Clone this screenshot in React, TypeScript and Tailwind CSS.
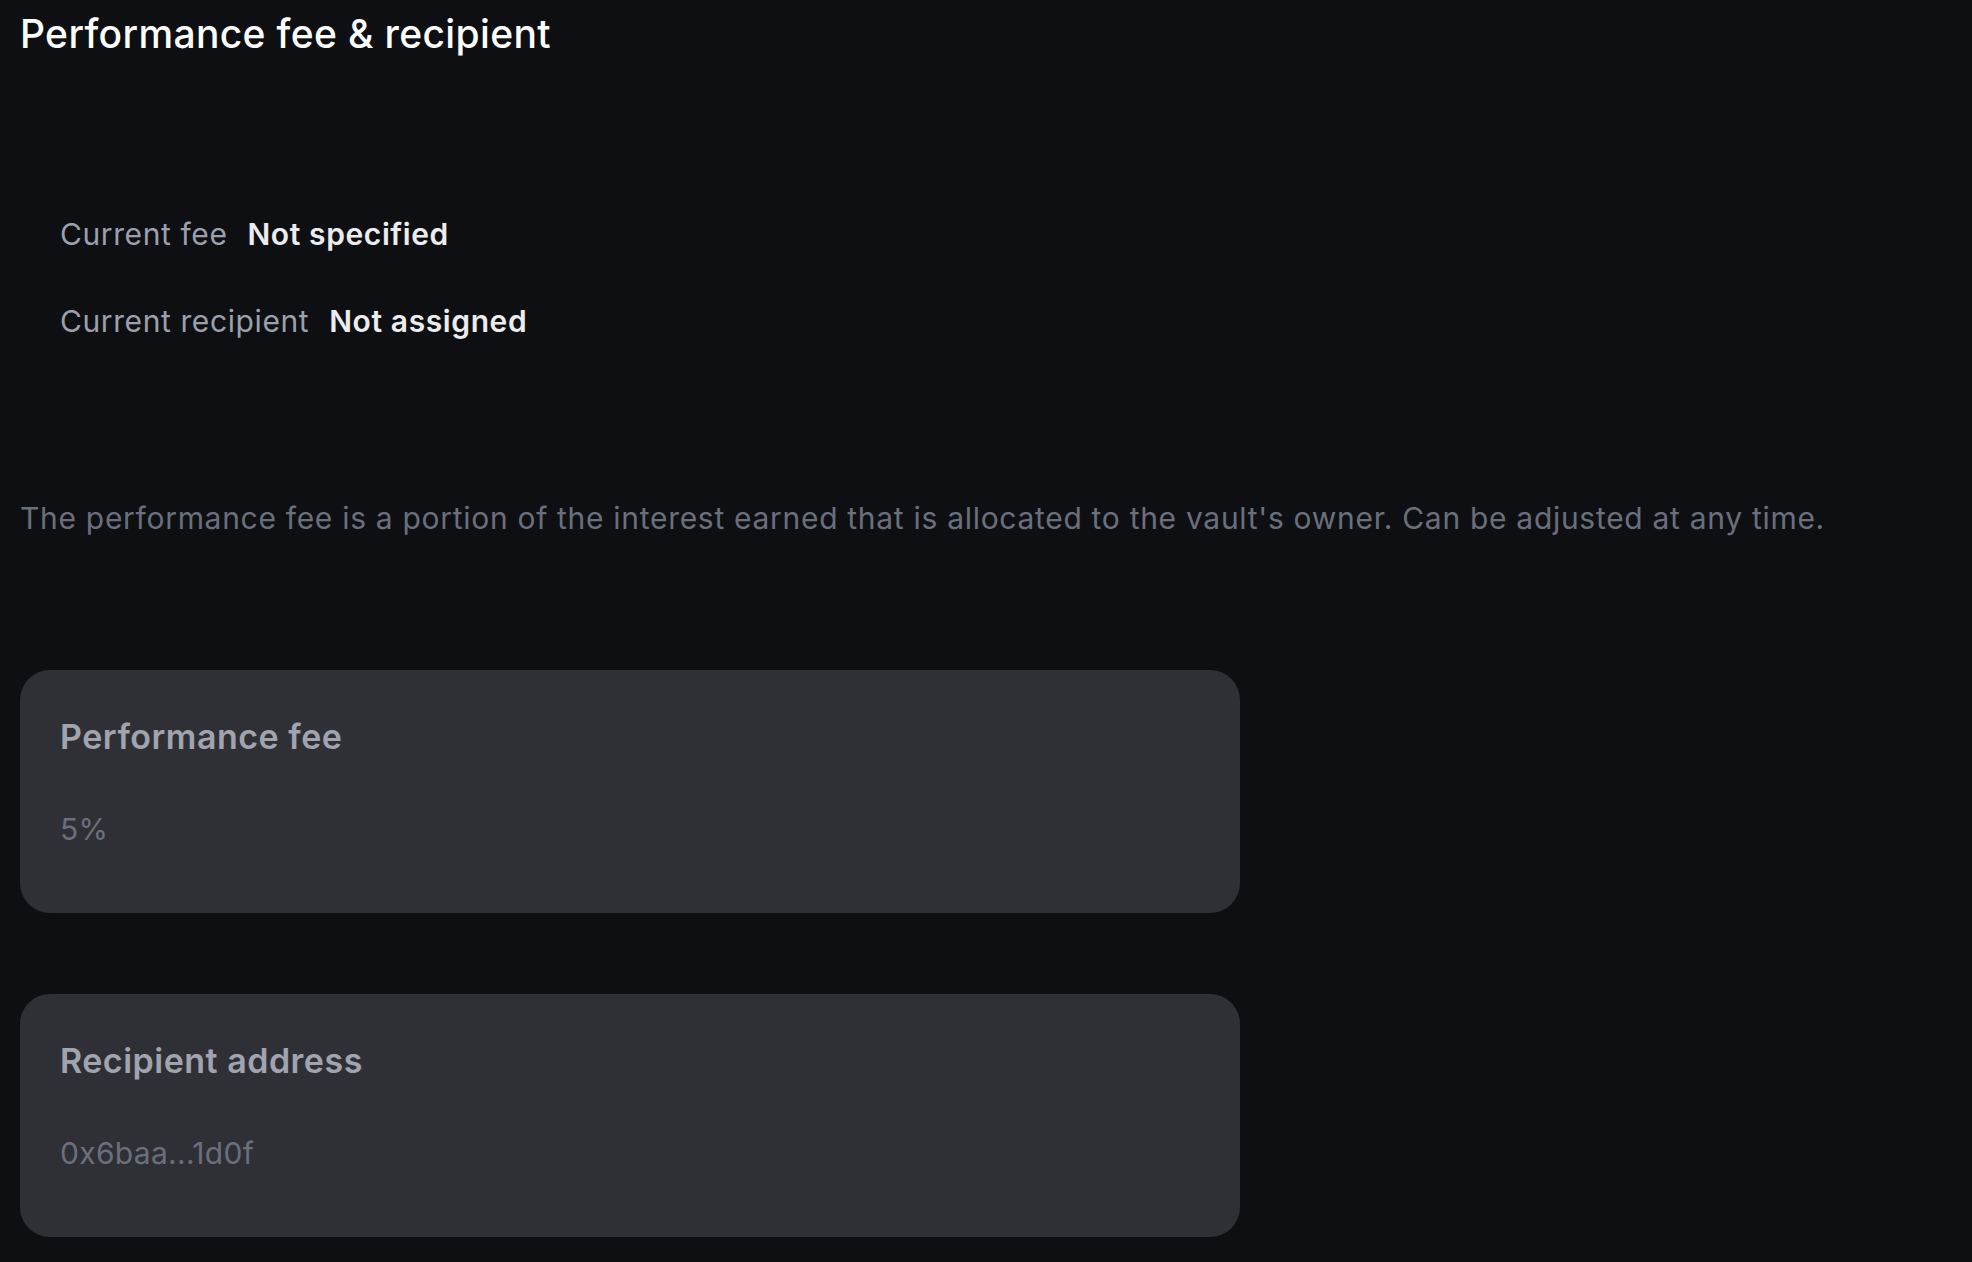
const font = { fontFamily: "Inter, 'Noto Sans', sans-serif" };

interface FieldCard {
  label: string;
  value: string;
}

const fields: FieldCard[] = [
  { label: "Performance fee", value: "5%" },
  { label: "Recipient address", value: "0x6baa...1d0f" },
];

export default function App() {
  return (
    <div
      className="min-h-screen w-full bg-[#0e0f12] px-5 pt-[10px] pb-10"
      style={font}
    >
      <h1 className="text-[39px] leading-[48px] font-medium text-white tracking-[0.35px]">
        Performance fee &amp; recipient
      </h1>

      {/* Current values */}
      <div className="mt-[156px] pl-10 flex flex-col gap-[47px] tracking-[0.6px]">
        <div className="flex items-center gap-[20px] text-[30px] leading-[40px]">
          <span className="text-[#9ca0ad]">Current fee</span>
          <span className="text-[#ececef] font-semibold">Not specified</span>
        </div>
        <div className="flex items-center gap-[20px] text-[30px] leading-[40px]">
          <span className="text-[#9ca0ad]">Current recipient</span>
          <span className="text-[#ececef] font-semibold">Not assigned</span>
        </div>
      </div>

      <p className="mt-[157px] text-[30px] leading-[40px] text-[#6b6f7c] tracking-[0.7px]">
        The performance fee is a portion of the interest earned that is
        allocated to the vault's owner. Can be adjusted at any time.
      </p>

      {/* Inputs */}
      <div className="mt-[132px] flex flex-col gap-[81px]">
        {fields.map((f) => (
          <div
            key={f.label}
            className="w-[1220px] h-[243px] rounded-[30px] bg-[#2f3036] px-10 pt-[45px]"
          >
            <div className="text-[34px] leading-[44px] font-semibold text-[#a1a3ae] tracking-[0.5px]">
              {f.label}
            </div>
            <div className="mt-[50px] text-[30px] leading-[40px] text-[#6b6f7c] tracking-[0.3px]">
              {f.value}
            </div>
          </div>
        ))}
      </div>
    </div>
  );
}
